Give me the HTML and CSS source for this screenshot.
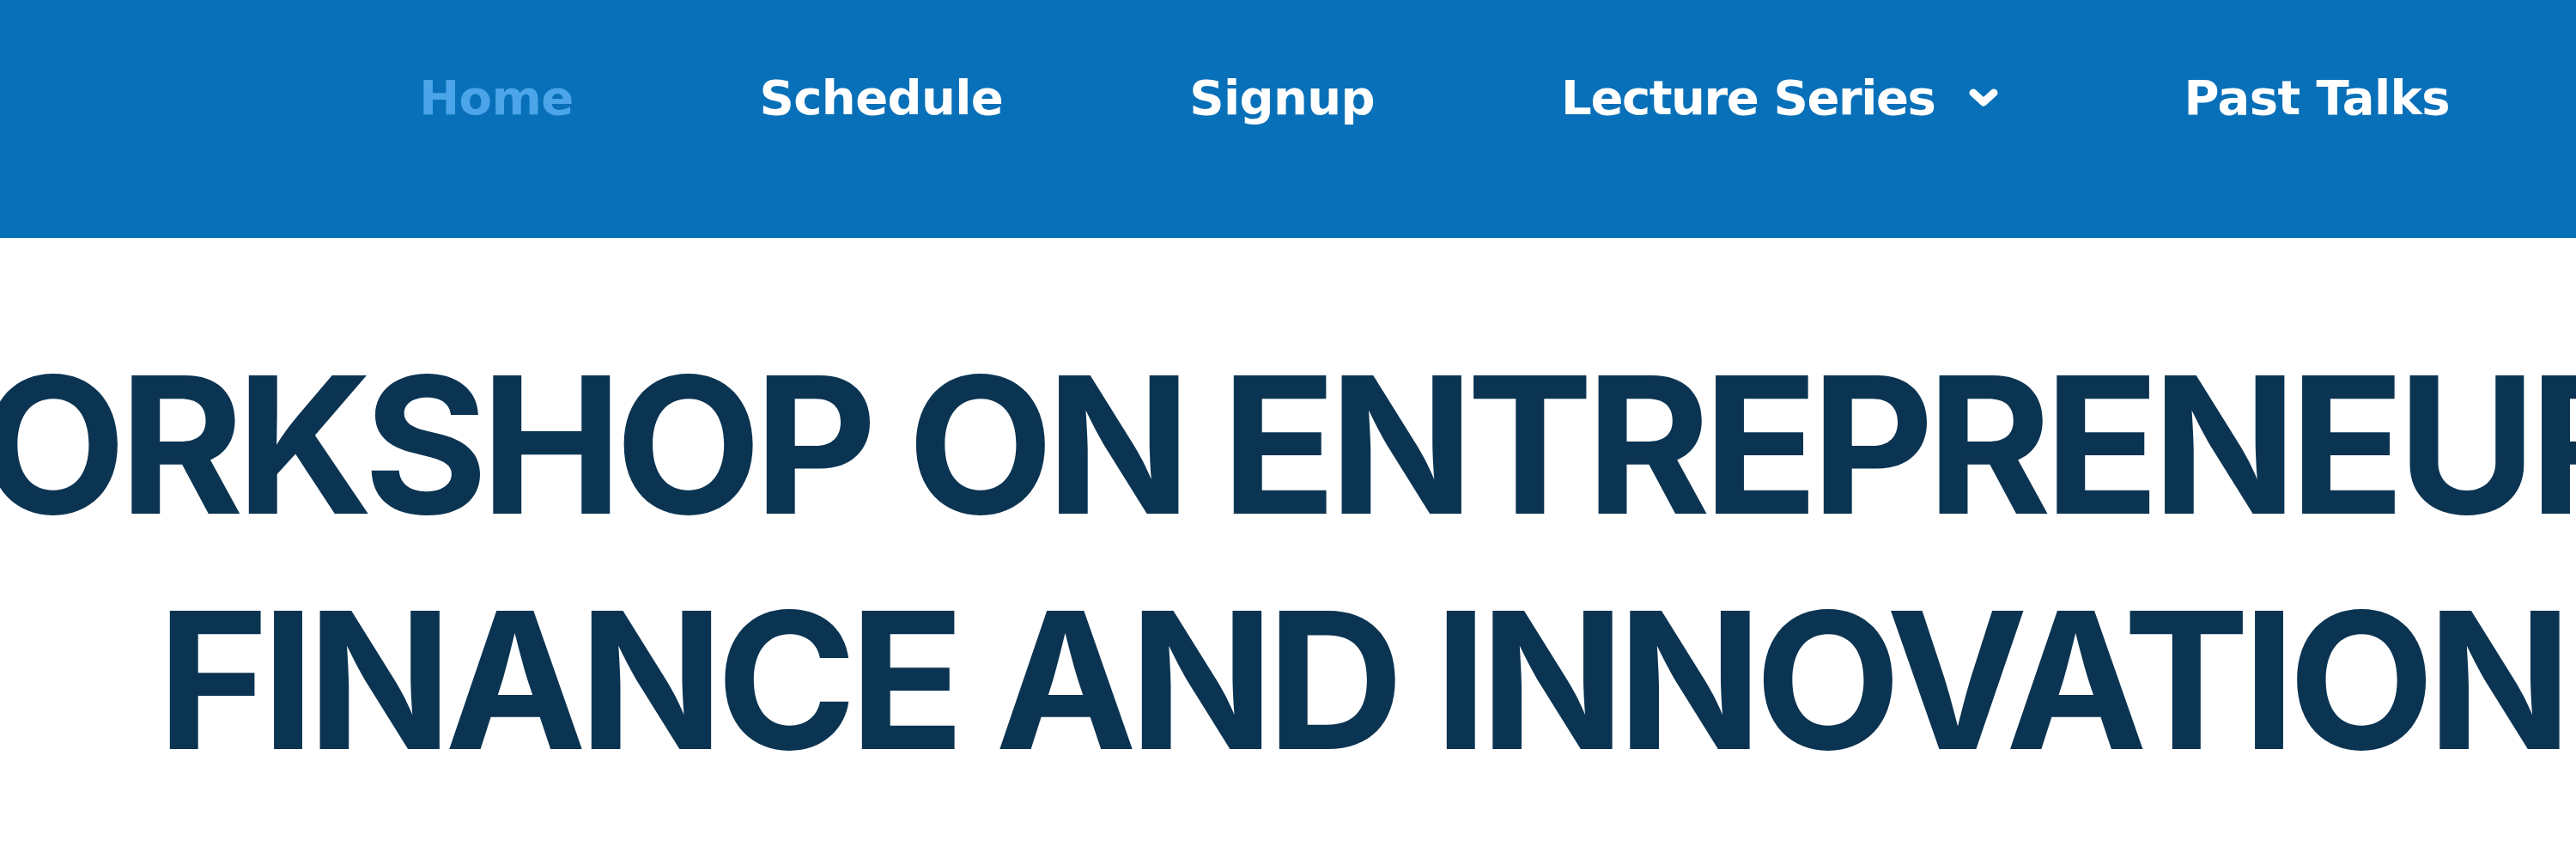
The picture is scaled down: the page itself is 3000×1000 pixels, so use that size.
FILE: index.html
```html
<!DOCTYPE html>
<html lang="en">
<head>
<meta charset="utf-8">
<title>Workshop on Entrepreneurial Finance and Innovation</title>
<link rel="stylesheet" href="styles.css">
</head>
<body>
<header class="topbar">
  <ul class="menu">
    <li><a class="menu-link active" href="#">Home</a></li>
    <li><a class="menu-link" href="#">Schedule</a></li>
    <li><a class="menu-link" href="#">Signup</a></li>
    <li><a class="menu-link has-sub" href="#"><span>Lecture Series</span><svg class="chev" viewBox="0 0 34 22" width="34" height="22"><polyline points="5,5 17,16 29,5" fill="none" stroke="#fff" stroke-width="9" stroke-linecap="round" stroke-linejoin="round"/></svg></a></li>
    <li><a class="menu-link" href="#">Past Talks</a></li>
  </ul>
</header>
<main class="hero">
  <h1 class="title"><span class="ln">WORKSHOP ON ENTREPRENEURIAL</span><br><span class="ln">FINANCE AND INNOVATION</span></h1>
</main>
</body>
</html>
```
FILE: styles.css
```css
html, body {
  margin: 0;
  padding: 0;
  overflow: hidden;
  background: #fff;
}
.topbar {
  height: 277px;
  background: #0870b8;
  display: flex;
  justify-content: flex-end;
  align-items: flex-start;
  padding-right: 147px;
  box-sizing: border-box;
}
.menu {
  list-style: none;
  margin: 0;
  padding: 84px 0 0;
  display: flex;
  gap: 217px;
}
.menu-link {
  display: flex;
  align-items: center;
  gap: 39px;
  font-family: "DejaVu Sans", sans-serif;
  font-weight: 700;
  font-size: 56px;
  line-height: 60px;
  letter-spacing: -0.6px;
  color: #fff;
  text-decoration: none;
  white-space: nowrap;
}
.menu-link.has-sub span {
  letter-spacing: -1.4px;
}
.menu-link.active {
  color: #4ba5e8;
}
.chev {
  display: block;
}
.hero {
  display: flex;
  justify-content: center;
  margin: 0 -500px 0 -330px;
  padding-top: 104px;
}
.title {
  margin: 0;
  font-family: "Inter", sans-serif;
  font-weight: 700;
  font-size: 221px;
  line-height: 274px;
  letter-spacing: -8.5px;
  color: #0b3452;
  text-align: center;
  white-space: nowrap;
}
```
